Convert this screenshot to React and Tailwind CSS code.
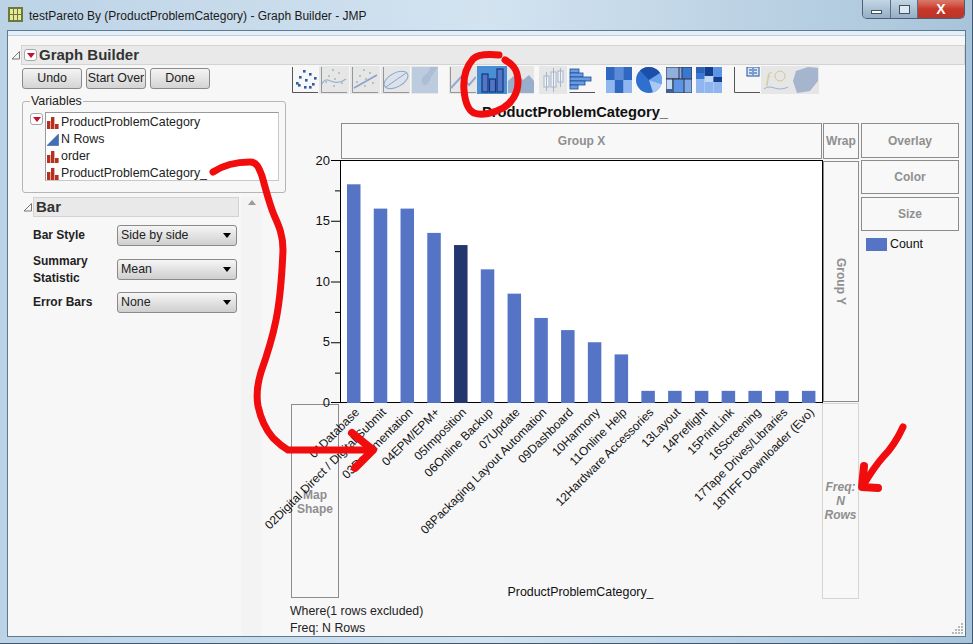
import React from "react";

const BAR = "#5574c5";
const values = [18, 16, 16, 14, 13, 11, 9, 7, 6, 5, 4, 1, 1, 1, 1, 1, 1, 1];
const names = [
  "01Database",
  "02Digital Direct / Digital Submit",
  "03Documentation",
  "04EPM/EPM+",
  "05Imposition",
  "06Online Backup",
  "07Update",
  "08Packaging Layout Automation",
  "09Dashboard",
  "10Harmony",
  "11Online Help",
  "12Hardware Accessories",
  "13Layout",
  "14Preflight",
  "15PrintLink",
  "16Screening",
  "17Tape Drives/Libraries",
  "18TIFF Downloader (Evo)",
];
const variables = [
  ["ProductProblemCategory", "bar"],
  ["N Rows", "tri"],
  ["order", "bar"],
  ["ProductProblemCategory_", "bar"],
];

function RedMenu({ className }) {
  return (
    <div className={"flex h-[12px] w-[13px] shrink-0 items-center justify-center rounded-[3px] border border-[#a8a8a8] bg-white " + className}>
      <div className="h-0 w-0 border-x-[4px] border-t-[5px] border-x-transparent border-t-[#c8102e]" />
    </div>
  );
}

function Disclosure({ className = "" }) {
  return (
    <svg width="10" height="10" viewBox="0 0 10 10" className={"shrink-0 " + className}>
      <path d="M1 9 L8.5 1.5 V9 Z" fill="#f4f4f4" stroke="#777" />
    </svg>
  );
}

function VarIcon({ kind }) {
  if (kind === "tri") {
    return (
      <svg width="12" height="12" viewBox="0 0 12 12">
        <path d="M0 11.5 L11.5 0 V11.5 Z" fill="#3f6fb5" stroke="#27508f" strokeWidth="0.5" />
      </svg>
    );
  }
  return (
    <svg width="12" height="12" viewBox="0 0 12 12" fill="#b5301f">
      <rect x="0" y="4" width="3.4" height="8" />
      <rect x="4" y="0" width="3.4" height="12" />
      <rect x="8" y="7" width="3.6" height="5" />
    </svg>
  );
}

function Button({ label }) {
  return (
    <div className="flex h-[21px] w-[60px] items-center justify-center rounded-[3px] border border-[#8a8a8a] bg-gradient-to-b from-[#f4f4f4] to-[#d4d4d4] text-[12.4px] text-[#222]">
      {label}
    </div>
  );
}

function Select({ label }) {
  return (
    <div className="flex h-[21px] w-[120px] items-center justify-between rounded-[3px] border border-[#8a8a8a] bg-gradient-to-b from-[#f6f6f6] to-[#cfcfcf] pl-[3px] pr-[5px] text-[12.4px] font-normal text-[#222]">
      <span>{label}</span>
      <div className="h-0 w-0 border-x-[4px] border-t-[5px] border-x-transparent border-t-black" />
    </div>
  );
}

function Zone({ children, className }) {
  return (
    <div className={"flex items-center justify-center border border-[#8c8c8c] bg-[#f8f8f8] text-center text-[12px] font-bold leading-[14px] text-[#8f8f8f] " + className}>
      {children}
    </div>
  );
}

// one cell of the graph type palette
function Ic({ w = 29, off, sel, children }) {
  return (
    <div
      className={
        "flex h-[28px] shrink-0 items-center justify-center " +
        (sel ? "bg-[#4a8fd6]" : off ? "bg-[#e6e6e6]" : "")
      }
      style={{ width: w }}
    >
      <svg width="26" height="26" viewBox="0 0 26 26" className={off ? "opacity-55" : ""}>
        {children}
      </svg>
    </div>
  );
}

const Axes = () => <path d="M0.5 0 V25.5 H26" fill="none" stroke="#555" />;

function Palette() {
  const dots = [[4, 18], [7, 12], [11, 6], [13, 15], [17, 9], [12, 22], [20, 19], [22, 13], [6, 20], [17, 22]];
  return (
    <div className="flex h-[28px] items-center">
      <div className="flex gap-[1px]">
        <Ic w={26}>
          <Axes />
          {dots.map(([x, y]) => (
            <rect key={x + "-" + y} x={x} y={y - 3} width="2.6" height="2.6" fill="#2e5da8" />
          ))}
        </Ic>
        <Ic off w={30}>
          <Axes />
          <path d="M1 17 C6 6 12 22 25 12" fill="none" stroke="#5f87bd" strokeWidth="1.2" />
          {dots.slice(0, 7).map(([x, y]) => (
            <rect key={x} x={x} y={y - 4} width="2" height="2" fill="#8aa" />
          ))}
        </Ic>
        <Ic off w={30}>
          <Axes />
          <path d="M2 21 L25 8" fill="none" stroke="#3f6fb5" strokeWidth="1.6" />
          {dots.slice(0, 7).map(([x, y]) => (
            <rect key={x} x={x} y={y - 4} width="2" height="2" fill="#8aa" />
          ))}
        </Ic>
        <Ic off w={29}>
          <Axes />
          <ellipse cx="13" cy="13" rx="13" ry="7" transform="rotate(-28 13 13)" fill="#d3e0f0" stroke="#3f6fb5" />
          <path d="M3 20 L23 6" stroke="#3f6fb5" />
        </Ic>
        <Ic off w={27}>
          <rect width="26" height="26" fill="#9cb6d8" />
          <path d="M18 0 C18 8 8 8 10 15 C12 22 18 16 19 10 L26 0 Z" fill="#7f9cc4" />
        </Ic>
      </div>
      <div className="ml-[11px] flex">
        <Ic off w={28}>
          <Axes />
          <path d="M1 21 L11 10 L19 18 L26 10" fill="none" stroke="#4f7cbe" strokeWidth="2" />
        </Ic>
        <Ic sel w={30}>
          <g fill="#5574c5" stroke="#123a78" strokeWidth="1.2">
            <rect x="3" y="7" width="6" height="18" />
            <rect x="10.5" y="12" width="6" height="13" />
            <rect x="18" y="2" width="6" height="23" />
          </g>
        </Ic>
        <Ic off w={27}>
          <path d="M0 14 L9 6 L15 13 L21 8 L26 14 V26 H0 Z" fill="#5b7fb8" />
        </Ic>
        <div className="w-[5px]" />
        <Ic off w={28}>
          <g fill="#fff" stroke="#6f8eba">
            <rect x="4" y="9" width="5" height="11" />
            <rect x="11" y="5" width="5" height="15" />
            <rect x="18" y="4" width="5" height="11" />
            <path d="M6.5 5 V24 M13.5 1 V25 M20.5 1 V20" fill="none" />
          </g>
        </Ic>
      </div>
      <div className="ml-[2px]">
        <Ic w={26}>
          <path d="M0.5 25.5 H26" fill="none" stroke="#555" />
          <g fill="#6d9be0" stroke="#1c4f9c" strokeWidth="0.8">
            <rect x="1" y="2" width="9" height="4" />
            <rect x="1" y="6" width="13" height="4" />
            <rect x="1" y="10" width="21" height="4" />
            <rect x="1" y="14" width="15" height="4" />
            <rect x="1" y="18" width="8" height="4" />
          </g>
        </Ic>
      </div>
      <div className="ml-[11px] flex gap-[4px]">
        <Ic w={26}>
          <rect width="26" height="26" fill="#6d9be0" />
          <path d="M0 0 H8.7 V13 H0 Z M17.4 0 H26 V13 H17.4 Z M8.7 13 H17.4 V26 H8.7 Z" fill="#2f68c0" />
          <path d="M8.7 0 H17.4 V13 H8.7 Z" fill="#5b8bd8" />
          <path d="M0 13 H8.7 V26 H0 Z M17.4 13 H26 V26 H17.4 Z" fill="#8fb6ee" />
        </Ic>
        <Ic w={26}>
          <circle cx="13" cy="13" r="13" fill="#2e6fd0" />
          <path d="M13 13 L4 3.5 A13 13 0 0 1 24 6 Z" fill="#1c4fa8" />
          <path d="M13 13 L24 6 A13 13 0 0 1 25.5 17 Z" fill="#6da4ee" />
          <path d="M13 13 L25.5 17 A13 13 0 0 1 17 25.4 Z" fill="#a9c9f4" />
        </Ic>
        <Ic w={26}>
          <rect width="26" height="26" fill="#7fa9e6" stroke="#334" />
          <rect x="0" y="0" width="13" height="12" fill="#8fb0dc" stroke="#334" />
          <rect x="16" y="0" width="10" height="12" fill="#3a78cf" stroke="#334" />
          <rect x="0" y="12" width="7" height="14" fill="#c3d8f5" stroke="#334" />
          <rect x="7" y="12" width="11" height="14" fill="#5c93e4" stroke="#334" />
          <rect x="0" y="22" width="7" height="4" fill="#3f5f8f" />
        </Ic>
        <Ic w={26}>
          <rect width="8.6" height="26" fill="#8fb6ee" />
          <rect x="8.7" width="8.6" height="26" fill="#8fb6ee" />
          <rect x="17.4" width="8.6" height="26" fill="#8fb6ee" />
          <rect width="8.6" height="6" fill="#2e62b8" />
          <rect width="8.6" height="6" y="6" fill="#3b78d4" />
          <rect x="8.7" width="8.6" height="9" fill="#12408f" />
          <rect x="8.7" y="9" width="8.6" height="6" fill="#c3d8f5" />
          <rect x="17.4" y="10" width="8.6" height="5" fill="#12408f" />
          <rect x="17.4" width="8.6" height="10" fill="#5c93e4" />
        </Ic>
      </div>
      <div className="ml-[11px] flex">
        <Ic w={28}>
          <Axes />
          <rect x="13" y="0" width="12" height="9" fill="#dbe8fa" stroke="#1c4f9c" />
          <path d="M15 3 H18 M15 6 H18 M20 3 H23 M20 6 H23 M19 1 V8" stroke="#1c4f9c" />
        </Ic>
        <Ic off w={29}>
          <path d="M1 22 C8 16 14 26 25 20" fill="none" stroke="#5f87bd" />
          <circle cx="17" cy="9" r="5" fill="none" stroke="#c9a94f" />
          <text x="3" y="16" fontFamily="Liberation Serif, serif" fontStyle="italic" fontSize="15" fill="#c9a94f">f</text>
        </Ic>
        <Ic off w={29}>
          <path d="M4 4 L16 0 L26 1 V14 L18 24 L5 26 L1 14 Z" fill="#6f8eba" />
        </Ic>
      </div>
    </div>
  );
}

function Chart() {
  const W = 483;
  const H = 243;
  const STEP = 26.76;
  const y = (v) => H - (v * H) / 20;
  return (
    <svg width={W} height={H} viewBox={`0 0 ${W} ${H}`} className="relative z-10 block overflow-visible font-['Liberation_Sans',sans-serif]">
      <rect x="0.5" y="0.5" width={W - 1} height={H - 1} fill="#fff" stroke="#000" />
      {values.map((v, i) => (
        <rect
          key={names[i]}
          x={7 + i * STEP}
          y={y(v)}
          width="13.5"
          height={H - y(v)}
          fill={i === 4 ? "#23376e" : BAR}
        />
      ))}
      {[0, 5, 10, 15, 20].map((v) => (
        <g key={v}>
          <path d={`M-9 ${y(v) + (v === 0 ? -0.5 : 0.5)} H0`} stroke="#000" />
          <text x="-10" y={y(v) + (v === 20 ? 5 : 4)} textAnchor="end" fontSize="13" fill="#111">
            {v}
          </text>
        </g>
      ))}
      {[2.5, 7.5, 12.5, 17.5].map((v) => (
        <path key={v} d={`M-5 ${y(v) + 0.5} H0`} stroke="#000" />
      ))}
      {names.map((n, i) => (
        <text
          key={n}
          x={20 + i * STEP}
          y={H + 10}
          textAnchor="end"
          fontSize="12"
          fill="#111"
          transform={`rotate(-45 ${20 + i * STEP} ${H + 10})`}
        >
          {n}
        </text>
      ))}
    </svg>
  );
}

function Annotations() {
  return (
    <svg width="973" height="644" viewBox="0 0 973 644" className="pointer-events-none absolute left-0 top-0 z-20">
      <g fill="none" stroke="#f10d0d" strokeWidth="7" strokeLinecap="round" strokeLinejoin="round">
        <path d="M499 55 C488 54 478 54 473 59 C466 67 463 78 464 90 C465 102 468 110 474 113 C482 116 494 113 503 108 C512 103 518 93 518 82 C518 72 515 65 505 60" />
        <path d="M213 172 C222 166 236 162 250 162 C257 162 259 168 262 176 C266 190 269 203 274 215 C279 226 283 235 283 250 C282 275 280 300 276 320 C272 340 266 358 261 372 C258 382 256 395 258 406 C261 420 266 430 273 438 C279 444 283 447 288 450 L371 450" />
        <path d="M352 433 L373 450 L355 468" strokeWidth="8" />
        <path d="M903 427 C897 440 890 450 883 457 C876 465 870 474 864 484" strokeWidth="7" />
        <path d="M864 466 L862 487 L878 488" strokeWidth="8" />
      </g>
    </svg>
  );
}

export default function App() {
  return (
    <div className="relative h-[644px] w-[973px] overflow-hidden bg-gradient-to-r from-[#bcd3e6] via-[#d3e3f0] to-[#a8c4da] font-['Liberation_Sans',sans-serif] text-[#222] shadow-[inset_-1px_-1px_0_#3f5870]">
      {/* title bar */}
      <div className="flex h-[30px] items-start pl-[8px] pt-[7px]">
        <div className="grid h-[15px] w-[15px] grid-cols-3 gap-[1px] border border-[#6b7a3a] bg-[#6b7a3a] p-[1px]">
          {Array.from({ length: 6 }).map((_, i) => (
            <div key={i} className="bg-[#e7e89a]" />
          ))}
        </div>
        <div className="ml-[6px] mt-[1px] text-[12px] leading-[16px] text-[#1a1a1a]">
          testPareto By (ProductProblemCategory) - Graph Builder - JMP
        </div>
        <div className="ml-auto mr-[8px] mt-[-7px] flex h-[19px] overflow-hidden rounded-b-[5px] border border-t-0 border-[#4d5f72]">
          <div className="flex w-[28px] items-end justify-center border-r border-[#5c6f82] bg-gradient-to-b from-[#c4d6e4] to-[#93aec6] pb-[4px]">
            <div className="h-[4px] w-[11px] border border-[#44525f] bg-white" />
          </div>
          <div className="flex w-[27px] items-center justify-center border-r border-[#5c6f82] bg-gradient-to-b from-[#c4d6e4] to-[#93aec6]">
            <div className="h-[9px] w-[11px] border-[1.5px] border-[#44525f] bg-[#dce8f2]" />
          </div>
          <div className="flex w-[46px] items-center justify-center bg-gradient-to-b from-[#d97a6c] via-[#c9372a] to-[#b8362a] text-[14px] font-bold leading-none text-white">
            X
          </div>
        </div>
      </div>

      {/* window body */}
      <div className="mx-[7px] h-[607px] border border-[#5d7a94] bg-[#f7f7f7]">
        <div className="h-[5px] border-b border-[#b7cfe3] bg-[#e3eef7]" />

        <div className="flex items-center pl-[3px] pt-[9px]">
          <Disclosure />
          <div className="flex h-[20px] flex-1 items-center border border-[#d3d3d3] bg-[#e9e9e9] pl-[2px] text-[15px] font-bold text-[#333]">
            <RedMenu className="mr-[2px]" />
            Graph Builder
          </div>
        </div>

        <div className="flex">
          {/* left column */}
          <div className="w-[279px] shrink-0">
            <div className="flex gap-[4px] pl-[14px] pt-[3px]">
              <Button label="Undo" />
              <Button label="Start Over" />
              <Button label="Done" />
            </div>
            <div className="relative ml-[14px] mt-[12px] h-[92px] w-[264px] rounded-[3px] border border-[#b5b5b5] pl-[7px] pt-[10px]">
              <div className="absolute left-[7px] top-[-7px] bg-[#f7f7f7] px-[1px] text-[12.4px] leading-[13px]">Variables</div>
              <div className="flex">
                <RedMenu className="mr-[2px] mt-[1px]" />
                <div className="h-[69px] w-[234px] border border-[#c9c9c9] border-t-[#999] border-l-[#999] bg-white pt-[1px]">
                  {variables.map(([n, k]) => (
                    <div key={n} className="flex h-[17px] items-center gap-[2px] pl-[1px] text-[12.4px] leading-[15px] text-[#222]">
                      <VarIcon kind={k} />
                      <span>{n}</span>
                    </div>
                  ))}
                </div>
              </div>
            </div>

            <div className="flex pt-[4px]">
              <div className="w-[231px]">
                <div className="flex items-center pl-[15px]">
                  <Disclosure />
                  <div className="flex h-[20px] flex-1 items-center border border-[#d3d3d3] bg-[#e9e9e9] pl-[2px] text-[15px] font-bold text-[#333]">
                    Bar
                  </div>
                </div>
                <div className="grid auto-rows-[33.5px] grid-cols-[84px_120px] items-center pl-[25px] pt-[2px] text-[12px] font-bold leading-[17px]">
                  <div>Bar Style</div>
                  <Select label="Side by side" />
                  <div className="pt-[1px]">
                    Summary
                    <br />
                    Statistic
                  </div>
                  <Select label="Mean" />
                  <div>Error Bars</div>
                  <Select label="None" />
                </div>
              </div>
              <div className="ml-[2px] h-[439px] w-[20px] bg-[#f3f3f3] pl-[7px] pt-[3px]">
                <div className="h-0 w-0 border-x-[4px] border-b-[5px] border-x-transparent border-b-[#9a9a9a]" />
              </div>
            </div>
          </div>

          {/* graph area */}
          <div className="flex-1">
            <div className="ml-[5px] pt-[1px]">
              <Palette />
            </div>
            <div className="ml-[54px] w-[468px] pt-[10px] text-center text-[14.7px] font-bold leading-[17px] text-[#111]">
              ProductProblemCategory_
            </div>
            <div className="grid grid-cols-[49px_483px_38px_98px] grid-rows-[37px_243px_197px] pl-[4px] pt-[2px]">
              <div />
              <Zone className="ml-[1px] h-[36px] w-[481px]">Group X</Zone>
              <Zone className="h-[36px] w-[36px]">Wrap</Zone>
              <div className="row-span-3 flex flex-col gap-[2px]">
                <Zone className="h-[35px] w-[98px]">Overlay</Zone>
                <Zone className="h-[34px] w-[98px]">Color</Zone>
                <Zone className="mt-[1px] h-[34px] w-[98px]">Size</Zone>
                <div className="mt-[5px] flex items-center gap-[3px] pl-[5px] text-[12.4px] leading-[13px] text-[#111]">
                  <div className="h-[13px] w-[21px] bg-[#5574c5]" />
                  Count
                </div>
              </div>
              <div />
              <Chart />
              <Zone className="mt-[1px] h-[241px] w-[36px]">
                <span className="[writing-mode:vertical-rl]">Group Y</span>
              </Zone>
              <Zone className="mr-[1px] mt-[1px] h-[194px]">
                <span className="pt-[2px]">
                  Map
                  <br />
                  Shape
                </span>
              </Zone>
              <div className="relative z-10 flex items-end justify-center pb-[1px] pr-[2px] text-[12.4px] leading-[14px] text-[#111]">
                ProductProblemCategory_
              </div>
              <Zone className="-ml-[1px] h-[196px] w-[37px] border-[#d6d6ce] italic">
                <span>
                  Freq:
                  <br />N
                  <br />
                  Rows
                </span>
              </Zone>
            </div>
            <div className="relative z-10 pl-[3px] pt-[3px] text-[12.3px] leading-[17px] text-[#222]">
              <div>Where(1 rows excluded)</div>
              <div>Freq: N Rows</div>
            </div>
          </div>
        </div>
      </div>

      {/* resize grip */}
      <svg width="12" height="12" viewBox="0 0 12 12" fill="#b9b9b9" className="absolute bottom-[9px] right-[9px]">
        <rect x="9" y="0" width="2" height="2" />
        <rect x="6" y="3" width="2" height="2" />
        <rect x="9" y="3" width="2" height="2" />
        <rect x="3" y="6" width="2" height="2" />
        <rect x="6" y="6" width="2" height="2" />
        <rect x="9" y="6" width="2" height="2" />
        <rect x="0" y="9" width="2" height="2" />
        <rect x="3" y="9" width="2" height="2" />
        <rect x="6" y="9" width="2" height="2" />
        <rect x="9" y="9" width="2" height="2" />
      </svg>
      <Annotations />
    </div>
  );
}
